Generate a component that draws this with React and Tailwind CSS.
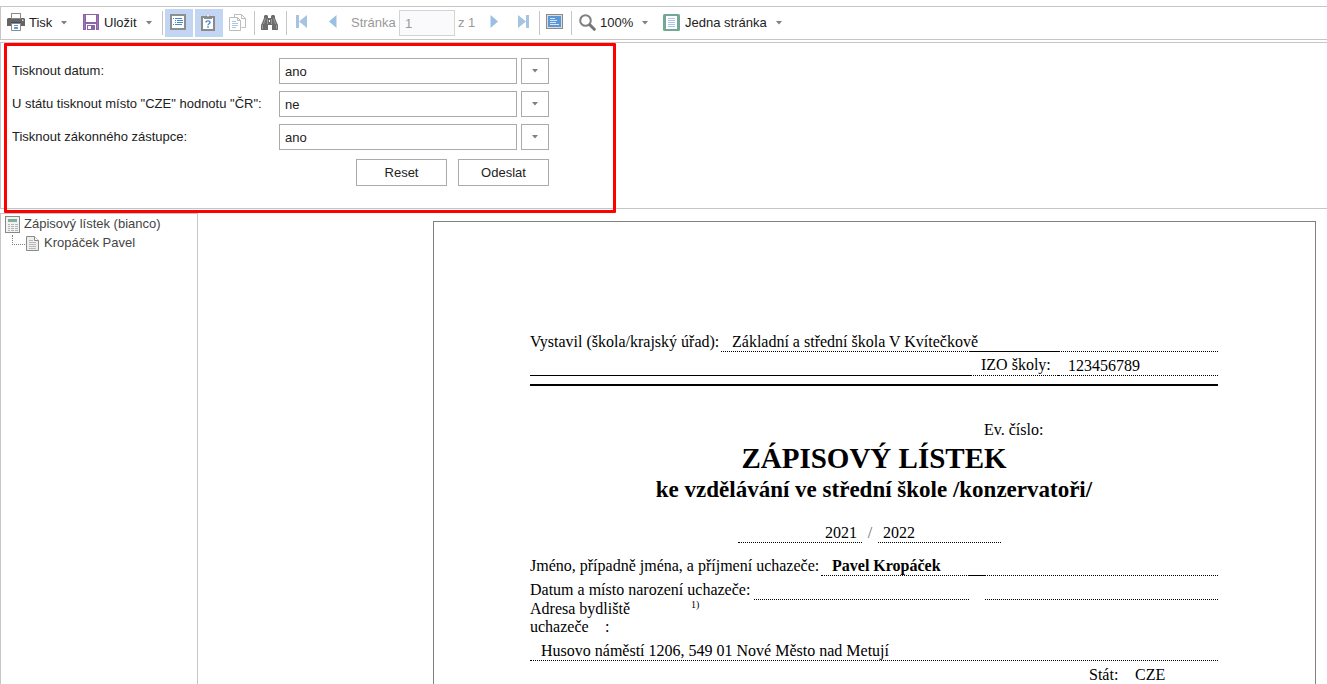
import React from "react";

function Caret() {
  return (
    <svg width="6" height="4" viewBox="0 0 6 4" aria-hidden="true" className="shrink-0">
      <path d="M0 0h6L3 3.6z" fill="#808080" />
    </svg>
  );
}

function Separator() {
  return <div className="h-6 w-px shrink-0 bg-[#c6c6c6]" />;
}

function PrintIcon() {
  return (
    <svg width="18" height="18" viewBox="0 0 18 18" aria-hidden="true" className="mb-0.5">
      <rect x="4.5" y="0.5" width="9" height="5" fill="#fff" stroke="#8a8a8a" />
      <path d="M1 5h3v1h10V5h3l1 1v7H0V6z" fill="#646464" />
      <path d="M4 9h10v3H4z" fill="#4b4b4b" />
      <path d="M15 6.500h1.500V8H15z" fill="#d8d8d8" />
      <path d="M4.500 10.500h9v7h-9z" fill="#fff" stroke="#8a8a8a" />
      <path d="M7 12.500h4M7 14.500h4M7 15.500h4" stroke="#5b9bd5" />
    </svg>
  );
}

function SaveIcon() {
  return (
    <svg width="16" height="16" viewBox="0 0 16 16" aria-hidden="true" className="mr-px mb-0.5">
      <path d="M0 0h16v16H0z" fill="#8a63a9" />
      <path d="M3 1h10v7H3z" fill="#fff" />
      <path d="M3 10h10v6H3z" fill="#fff" />
      <path d="M4 11h8v5H4z" fill="#8a63a9" />
      <path d="M5 12h3v3H5z" fill="#fff" />
      <path d="M1.500 1v14M14.500 1v14" stroke="#9a78b6" />
    </svg>
  );
}

function BookmarksIcon() {
  return (
    <svg width="16" height="16" viewBox="0 0 16 16" aria-hidden="true" className="mb-0.5">
      <rect x="1" y="1" width="14" height="14" fill="#fff" stroke="#8e8e8e" strokeWidth="2" />
      <path d="M3 4.500h1M5 4.500h7M5 6.500h1M7 6.500h6M5 8.500h1M7 8.500h6M3 10.500h1M5 10.500h7" stroke="#4a8ac8" />
    </svg>
  );
}

function ParametersIcon() {
  return (
    <svg width="14" height="18" viewBox="0 0 14 18" aria-hidden="true" className="mb-0.5">
      <rect x="1" y="4" width="12" height="13" fill="#fff" stroke="#8a8a8a" strokeWidth="2" />
      <path d="M3 3h2.500a1.500 1.500 0 0 1 3 0H11v3H3z" fill="#8a8a8a" />
      <circle cx="7" cy="2.500" r="1" fill="#fff" />
      <path d="M5 9.500c0-2.200 4-2.200 4 0 0 1.300-2 1.300-2 2.700" fill="none" stroke="#4a8ac8" strokeWidth="1.400" />
      <path d="M6.200 13.300h1.600v1.500H6.200z" fill="#4a8ac8" />
    </svg>
  );
}

function ResourcesIcon() {
  return (
    <svg width="17" height="17" viewBox="0 0 17 17" aria-hidden="true" className="mb-0.5">
      <path d="M5.500 3.500v-3h7l4 4v9h-4" fill="#fff" stroke="#bdbdbd" />
      <path d="M12.500 0.500v4h4" fill="none" stroke="#bdbdbd" />
      <path d="M.5 3.500h8l3 3v10H.5z" fill="#fff" stroke="#bdbdbd" />
      <path d="M8.500 3.500v3h3" fill="none" stroke="#bdbdbd" />
      <path d="M3 7.500h4M3 9.500h6M3 11.500h6M3 13.500h4" stroke="#a9c8e6" />
    </svg>
  );
}

function BinocularsIcon() {
  return (
    <svg width="17" height="15" viewBox="0 0 17 15" aria-hidden="true" className="mb-0.5">
      <path d="M3 1l1-1h2l1 1v2h3V1l1-1h2l1 1v2l2 5 1 2v5h-6v-5H7v5H0v-5l1-2 2-5z" fill="#6c6c6c" />
      <path d="M2.500 9l2-6M14.500 9l-2-6M6.500 4v5M10.500 4v5" stroke="#999" />
      <path d="M8 5h1v2H8z" fill="#fff" />
      <path d="M1.500 10v4M15.500 10v4" stroke="#999" />
    </svg>
  );
}

function FirstIcon() {
  return (
    <svg width="11" height="13" viewBox="0 0 11 13" aria-hidden="true" className="mb-[3px]">
      <path d="M0 0h3v13H0zM11 0v13L3 6.500z" fill="#a6c3e2" />
    </svg>
  );
}

function PrevIcon() {
  return (
    <svg width="8" height="13" viewBox="0 0 8 13" aria-hidden="true" className="mb-[3px]">
      <path d="M7.500 0v13L0 6.500z" fill="#9bbfe2" />
    </svg>
  );
}

function NextIcon() {
  return (
    <svg width="8" height="13" viewBox="0 0 8 13" aria-hidden="true" className="mb-[3px]">
      <path d="M.5 0v13L8 6.500z" fill="#9bbfe2" />
    </svg>
  );
}

function LastIcon() {
  return (
    <svg width="11" height="13" viewBox="0 0 11 13" aria-hidden="true" className="mb-[3px]">
      <path d="M8 0h3v13H8zM0 0v13l8-6.500z" fill="#a6c3e2" />
    </svg>
  );
}

function FullScreenIcon() {
  return (
    <svg width="17" height="15" viewBox="0 0 17 15" aria-hidden="true" className="mb-[3px]">
      <rect x=".5" y=".5" width="16" height="14" fill="#dcdcdc" stroke="#8a8a8a" />
      <rect x="2" y="2" width="13" height="11" fill="#5b96d6" />
      <path d="M4 4.500h5M4 6.500h7M4 8.500h6M4 10.500h9" stroke="#d6e6f6" />
    </svg>
  );
}

function ZoomIcon() {
  return (
    <svg width="17" height="17" viewBox="0 0 17 17" aria-hidden="true" className="mb-0.5">
      <circle cx="6.500" cy="6.500" r="5.300" fill="#fff" stroke="#808080" strokeWidth="2" />
      <path d="M11 11L15.300 15.300" stroke="#757575" strokeWidth="3" strokeLinecap="round" />
    </svg>
  );
}

function SinglePageIcon() {
  return (
    <svg width="17" height="17" viewBox="0 0 17 17" aria-hidden="true" className="mb-0.5">
      <rect width="17" height="17" rx="1.500" fill="#74a794" />
      <path d="M3 2h11v13H3z" fill="#fff" />
      <path d="M5 4.500h7M5 6.500h7M5 8.500h7M5 10.500h7M5 12.500h7" stroke="#a9c6e6" />
    </svg>
  );
}

function ReportIcon() {
  return (
    <svg width="15" height="17" viewBox="0 0 15 17" aria-hidden="true" className="shrink-0">
      <rect x=".5" y=".5" width="14" height="16" fill="#f2f2f2" stroke="#888" />
      <path d="M3 3h9v3H3z" fill="#7fae9b" />
      <path d="M3 8h2v1H3zM6 8h3v1H6zM10 8h3v1h-3zM3 10h2v1H3zM6 10h3v1H6zM10 10h3v1h-3zM3 12h2v1H3zM6 12h3v1H6zM10 12h3v1h-3zM3 14h2v1H3zM6 14h3v1H6zM10 14h3v1h-3z" fill="#b4b4b4" />
    </svg>
  );
}

function DocumentIcon() {
  return (
    <svg width="13" height="15" viewBox="0 0 13 15" aria-hidden="true" className="shrink-0">
      <path d="M.5.5h8l4 4v10H.5z" fill="#eee" stroke="#8a8a8a" />
      <path d="M8.500.5v4h4" fill="#fff" stroke="#8a8a8a" />
      <path d="M3 4.500h4M3 6.500h7M3 8.500h7M3 10.500h7M3 12.500h7" stroke="#b8b8b8" />
    </svg>
  );
}

function Toolbar() {
  return (
    <div role="toolbar" className="flex h-[34px] shrink-0 items-center border border-r-0 border-[#c6c6c6]">
      <button className="ml-1.5 flex items-center">
        <PrintIcon />
        <span className="ml-1 w-8 text-left">Tisk</span>
        <Caret />
      </button>
      <button className="ml-4 flex items-center">
        <SaveIcon />
        <span className="ml-1 w-[42px] text-left">Uložit</span>
        <Caret />
      </button>
      <div className="ml-2.5 flex items-center gap-[2px]">
        <Separator />
        <button aria-label="Záložky" className="flex h-7 w-7 items-center justify-center bg-[#c2d5f2] pr-0.5"><BookmarksIcon /></button>
        <button aria-label="Parametry" className="flex h-7 w-7 items-center justify-center bg-[#c2d5f2] pr-0.5"><ParametersIcon /></button>
        <button aria-label="Zdroje" className="flex h-7 w-7 items-center justify-center pr-1"><ResourcesIcon /></button>
      </div>
      <div className="ml-px flex items-center">
        <Separator />
        <button aria-label="Hledat" className="flex w-[31px] justify-center pr-0.5"><BinocularsIcon /></button>
        <Separator />
      </div>
      <button aria-label="První stránka" className="flex w-[31px] justify-center pr-0.5"><FirstIcon /></button>
      <button aria-label="Předchozí stránka" className="flex w-[31px] justify-center pr-0.5"><PrevIcon /></button>
      <label htmlFor="page" className="ml-0.5 w-12 text-[#999]">Stránka</label>
      <input id="page" defaultValue="1" className="h-[26px] w-14 border border-[#d4d4d4] bg-[#faf9fc] px-[5px] text-[#999]" />
      <span className="ml-[3px] w-5 whitespace-nowrap text-[#999]">z 1</span>
      <button aria-label="Další stránka" className="flex w-[31px] justify-center"><NextIcon /></button>
      <button aria-label="Poslední stránka" className="mr-px flex w-[29px] justify-center"><LastIcon /></button>
      <Separator />
      <button aria-label="Celá obrazovka" className="flex w-[31px] justify-center pr-0.5"><FullScreenIcon /></button>
      <Separator />
      <button className="ml-[7px] flex items-center">
        <ZoomIcon />
        <span className="ml-1 w-[42px] text-left">100%</span>
        <Caret />
      </button>
      <button className="ml-[15px] flex items-center">
        <SinglePageIcon />
        <span className="ml-[5px] w-[91px] whitespace-nowrap text-left">Jedna stránka</span>
        <Caret />
      </button>
    </div>
  );
}

const parameters = [
  { id: "date", label: "Tisknout datum:", value: "ano" },
  { id: "country", label: 'U státu tisknout místo "CZE" hodnotu "ČR":', value: "ne" },
  { id: "guardian", label: "Tisknout zákonného zástupce:", value: "ano" },
];

function ParameterPanel() {
  return (
    <div className="relative mt-0.5 shrink-0 border border-r-0 border-[#c6c6c6] pt-[15px] pb-[22px] pl-[11px]">
      <form className="w-[537px]" onSubmit={(e) => e.preventDefault()}>
        <div className="flex flex-col gap-[7px]">
          {parameters.map((p) => (
            <div key={p.id} className="flex items-center">
              <label htmlFor={p.id} className="flex-1 whitespace-nowrap">{p.label}</label>
              <input id={p.id} defaultValue={p.value} className="h-[26px] w-[238px] border border-[#ababab] px-[5px]" />
              <button type="button" aria-label={p.label} className="ml-1 flex h-[26px] w-7 items-center justify-center border border-[#ababab]"><Caret /></button>
            </div>
          ))}
        </div>
        <div className="mt-[9px] flex justify-end gap-[11px]">
          <button type="reset" className="h-[27px] w-[91px] border border-[#ababab]">Reset</button>
          <button type="submit" className="h-[27px] w-[91px] border border-[#ababab]">Odeslat</button>
        </div>
      </form>
      <div className="pointer-events-none absolute top-0 -bottom-[5px] left-[3px] z-10 w-[612px] rounded-[1px] border-3 border-[#ff0000]" />
    </div>
  );
}

function Sidebar() {
  return (
    <aside className="w-[198px] shrink-0 border border-b-0 border-[#c6c6c6] pt-px pl-1 text-[#444]">
      <div className="flex h-[19px] items-center gap-1">
        <ReportIcon />
        <span className="mb-px">Zápisový lístek (bianco)</span>
      </div>
      <div className="flex h-[19px] items-center pl-[7px]">
        <div className="mr-px mb-2 h-[10px] w-[13px] border-b border-l border-dotted border-[#808080]" />
        <DocumentIcon />
        <span className="mb-px ml-[5px]">Kropáček Pavel</span>
      </div>
    </aside>
  );
}

function Report() {
  return (
    <article className="ml-auto w-full max-w-[883px] border border-[#808080] pt-[110px] pr-[97px] pl-24 font-['Liberation_Serif',serif] text-[16px] leading-[18px] whitespace-nowrap text-black">
      <div className="flex h-5 leading-5">
        <span className="w-[191px]">Vystavil (škola/krajský úřad):</span>
        <span className="w-[249px] border-b border-dotted pl-[11px]">Základní a střední škola V Kvítečkově</span>
        <span className="w-[88px] border-b" />
        <span className="flex-1 border-b border-dotted" />
      </div>
      <div className="flex h-6">
        <span className="w-[440px] border-b" />
        <span className="w-[88px] border-b border-dotted pt-1 pl-[11px]">IZO školy:</span>
        <span className="flex-1 border-b border-dotted pt-[5px] pl-[10px]">123456789</span>
      </div>
      <div className="mt-2 h-0.5 bg-black" />
      <div className="mt-[35px] pl-[454px]">Ev. číslo:</div>
      <h1 className="mt-[3px] text-center text-[29px] leading-8 font-bold">ZÁPISOVÝ LÍSTEK</h1>
      <h2 className="mt-px text-center text-[23px] leading-[30px] font-bold">ke vzdělávání ve střední škole /konzervatoři/</h2>
      <div className="mt-[18px] flex h-5 pl-52 leading-5">
        <span className="w-[124px] border-b border-dotted pr-[5px] text-right">2021</span>
        <span className="w-4 text-center text-[#666]">/</span>
        <span className="w-[123px] border-b border-dotted pl-[5px]">2022</span>
      </div>
      <div className="mt-[13px] flex h-5 leading-5">
        <span className="w-[291px]">Jméno, případně jména, a příjmení uchazeče:</span>
        <span className="w-[148px] border-b border-dotted pl-[11px] font-bold">Pavel Kropáček</span>
        <span className="w-4 border-b" />
        <span className="flex-1 border-b border-dotted" />
      </div>
      <div className="mt-1 flex h-5 leading-5">
        <span className="w-[224px]">Datum a místo narození uchazeče:</span>
        <span className="mr-4 w-[215px] border-b border-dotted" />
        <span className="flex-1 border-b border-dotted" />
      </div>
      <div className="flex">
        <span className="w-[161px]">Adresa bydliště</span>
        <span className="text-[10px] leading-[10px]">1)</span>
      </div>
      <div className="flex">
        <span className="w-[75px]">uchazeče</span>
        <span>:</span>
      </div>
      <div className="mt-[5px] h-5 border-b border-dotted pl-[11px] leading-5">Husovo náměstí 1206, 549 01 Nové Město nad Metují</div>
      <div className="mt-[5px] flex pl-[559px]">
        <span className="w-[46px]">Stát:</span>
        <span>CZE</span>
      </div>
    </article>
  );
}

export default function App() {
  return (
    <div className="flex h-screen flex-col overflow-hidden bg-white pt-1.5 font-['Liberation_Sans',sans-serif] text-[13px] leading-4 text-[#222]">
      <Toolbar />
      <ParameterPanel />
      <div className="mt-1 flex min-h-0 flex-1">
        <Sidebar />
        <main className="min-w-0 flex-1 overflow-hidden pt-2 pr-[11px]">
          <Report />
        </main>
      </div>
    </div>
  );
}
